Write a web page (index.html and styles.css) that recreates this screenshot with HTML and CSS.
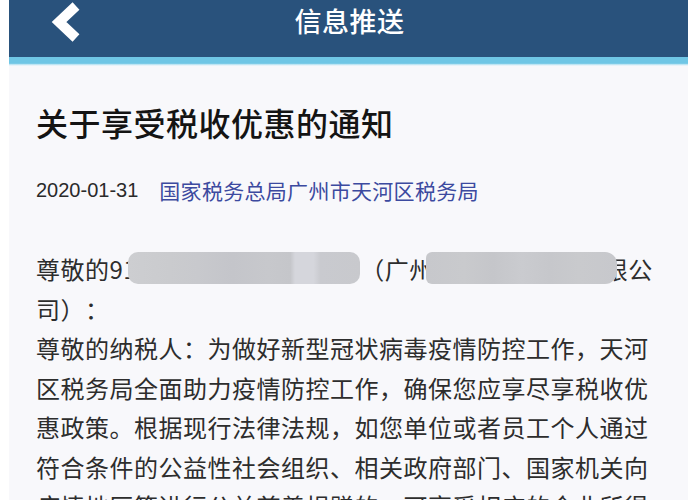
FILE: index.html
```html
<!DOCTYPE html>
<html lang="zh-CN">
<head>
<meta charset="utf-8">
<link rel="stylesheet" href="styles.css">
</head>
<body>
<div class="page">
  <header class="topbar">
    <div class="bar-row">
      <svg class="back" width="40" height="44" viewBox="40 0 40 44" aria-hidden="true">
        <polyline points="76,6 59,22 76,38" fill="none" stroke="#ffffff" stroke-width="10" stroke-linejoin="miter"/>
      </svg>
      <h1 class="bar-title">信息推送</h1>
    </div>
  </header>
  <div class="stripe"></div>
  <main class="content">
    <h2 class="title">关于享受税收优惠的通知</h2>
    <div class="meta">
      <span class="date">2020-01-31</span>
      <span class="source">国家税务总局广州市天河区税务局</span>
    </div>
    <div class="body">
      <p class="para">尊敬的91<span class="redact r1"></span>（广州<span class="redact r2"></span>限公司）：</p>
      <p class="para">尊敬的纳税人：为做好新型冠状病毒疫情防控工作，天河区税务局全面助力疫情防控工作，确保您应享尽享税收优惠政策。根据现行法律法规，如您单位或者员工个人通过符合条件的公益性社会组织、相关政府部门、国家机关向疫情地区等进行公益慈善捐赠的，可享受相应的企业所得税、个人所得税税前扣除优惠。</p>
    </div>
  </main>
</div>
</body>
</html>
```

FILE: styles.css
```css
html, body {
  margin: 0;
  padding: 0;
  background: #ffffff;
  overflow: hidden;
}

.page {
  margin-left: 9px;
  width: 679px;
  height: 500px;
  background: #f8f8fb;
  font-family: "Noto Sans CJK SC", "Noto Sans", sans-serif;
  text-spacing-trim: space-all;
}

.topbar {
  background: #29527c;
  height: 57px;
}

.bar-row {
  position: relative;
  height: 42px;
  display: flex;
  align-items: center;
  justify-content: center;
}

.back {
  position: absolute;
  left: 31px;
  top: 0;
}

.bar-title {
  margin: 0;
  color: #ffffff;
  font-size: 27px;
  font-weight: 500;
  letter-spacing: 0.5px;
  line-height: 42px;
  padding-left: 2px;
}

.stripe {
  height: 9px;
  background: linear-gradient(180deg, #6fc6e5 0%, #6fc6e5 70%, #c8e9f5 85%, #f8f8fb 100%);
}

.content {
  padding: 34px 0 0 27px;
}

.title {
  margin: 0;
  font-size: 32px;
  font-weight: 500;
  line-height: 44px;
  letter-spacing: 0.5px;
  color: #141414;
}

.meta {
  margin-top: 31px;
  display: flex;
  align-items: center;
  gap: 21px;
  height: 30px;
}

.date {
  font-family: "Liberation Sans", Arial, sans-serif;
  font-size: 20px;
  color: #2a2a2a;
}

.source {
  font-size: 21px;
  letter-spacing: 0.3px;
  color: #3c4aa0;
}

.body {
  margin-top: 44px;
  width: 625px;
  font-size: 24px;
  letter-spacing: 0.5px;
  line-height: 39.5px;
  color: #2d2d2d;
}

.para {
  margin: 0;
}

.redact {
  display: inline-block;
  position: relative;
  z-index: 1;
  vertical-align: top;
  margin-top: 3px;
  height: 32px;
  border-radius: 10px;
  background: linear-gradient(90deg,
    #cdced1 0%, #cacbce 18%, #c8c9cd 30%, #c4c5ca 45%,
    #c7c8cc 60%, #c5c6ca 70%, #d5d6dc 72%, #d5d6dc 80%, #c9cacf 83%, #c8c9cd 100%);
}

.r1 {
  width: 232px;
  margin-left: -9px;
}

.r2 {
  width: 191px;
  margin-left: -8px;
  margin-right: -13px;
  border-radius: 6px 12px 12px 6px;
  background: linear-gradient(90deg,
    #c7c8cc 0%, #c9cacd 20%, #c5c6ca 35%, #cacbcf 50%, #c6c7cb 65%, #c9cacd 80%, #c7c8cc 100%);
}
```
